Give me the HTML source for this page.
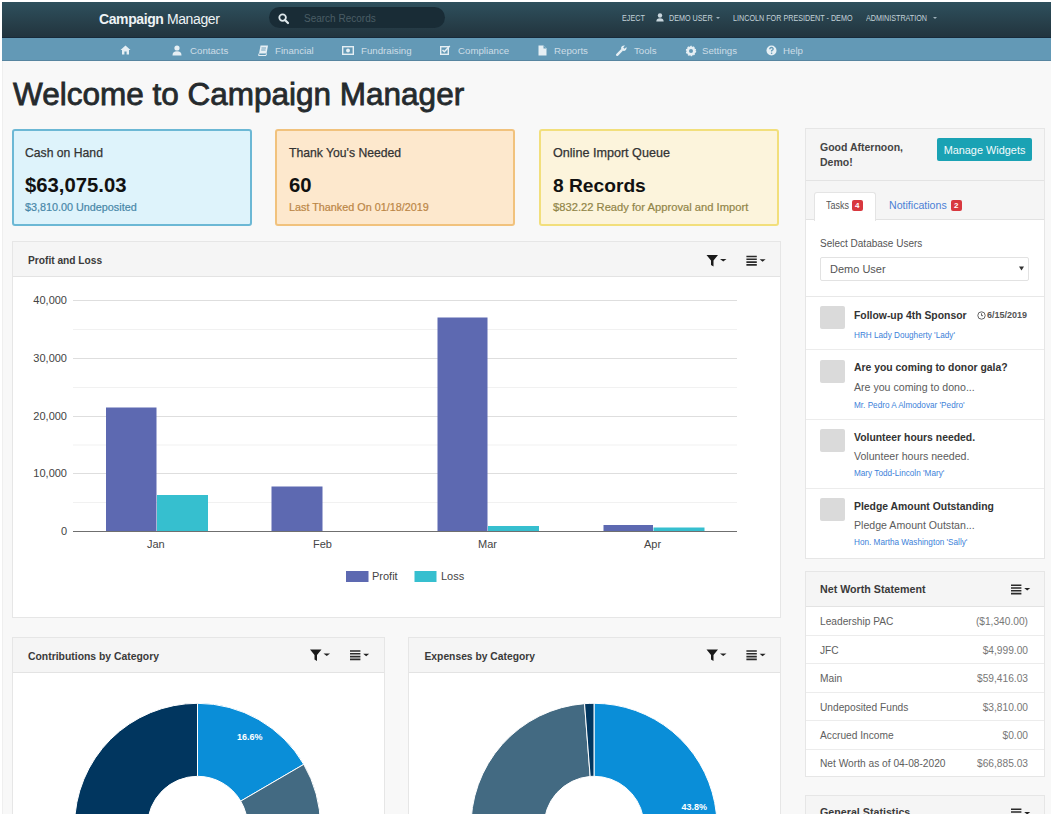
<!DOCTYPE html>
<html><head><meta charset="utf-8">
<style>
*{box-sizing:border-box;margin:0;padding:0}
html,body{width:1051px;height:816px;overflow:hidden;background:#fff;font-family:"Liberation Sans",sans-serif;color:#333}
.abs{position:absolute}
svg{position:absolute;overflow:visible}
#bg{position:absolute;left:2px;top:2px;width:1049px;height:814px;background:#f8f8f8}
#nav{position:absolute;left:2px;top:2px;width:1049px;height:36px;background:linear-gradient(#2e505d,#273f4a 60%,#22343e);border-bottom:1px solid #172a3a}
#sub{position:absolute;left:2px;top:38px;width:1049px;height:23px;background:#6399b6;border-bottom:1px solid #5785a0}
.t{position:absolute;white-space:nowrap;line-height:1}
.brand{left:99px;top:12px;font-size:14px;color:#eef3f5;letter-spacing:-0.4px}
.search{left:269px;top:7px;width:176px;height:21px;border-radius:11px;background:#192c36}
.nt{color:#c3d2d9;font-size:9px;top:13.5px;transform:scaleX(0.8);transform-origin:0 0}
.st{color:#cddde6;font-size:9.7px;top:46px}
.title{left:13px;top:79px;font-size:31.5px;color:#222;-webkit-text-stroke:0.8px #252a2d;color:#252a2d}
.card{position:absolute;top:129px;height:97px;width:240px;border:2px solid;border-radius:3px}
.ch{font-size:12.2px;color:#333;left:11px;top:16px;-webkit-text-stroke:0.25px #333}
.cv{font-size:20.3px;font-weight:bold;color:#111;left:11px;top:44px}
.cs{font-size:10.8px;left:11px;top:71px;-webkit-text-stroke:0.2px currentColor}
.panel{position:absolute;background:#fff;border:1px solid #e6e6e6}
.ph{position:absolute;left:0;top:0;right:0;background:#f5f5f5;border-bottom:1px solid #e3e3e3}
.pt{font-size:10.2px;font-weight:bold;color:#3a3a3a}
.ax{font-size:11px;color:#444}
.nw{font-size:10.2px;color:#5e5e5e}
</style></head><body>
<div id="bg"></div>
<div class="abs" style="left:2px;top:61px;width:1px;height:753px;background:#efefef"></div>
<div id="nav"></div>
<div id="sub"></div>
<div class="t brand"><b>Campaign</b> Manager</div>
<div class="abs search"></div>
<svg style="left:278px;top:13px" width="12" height="12" viewBox="0 0 12 12"><circle cx="4.6" cy="4.6" r="3.3" fill="none" stroke="#dfe8ec" stroke-width="1.8"/><path d="M7 7 L10 10" stroke="#dfe8ec" stroke-width="2.2" stroke-linecap="round"/></svg>
<div class="t" style="left:304px;top:13.5px;font-size:10px;color:#4a5d65">Search Records</div>

<div class="t nt" style="left:622px">EJECT</div>
<svg style="left:656px;top:13px" width="8" height="9" viewBox="0 0 8 9"><circle cx="4" cy="2.5" r="2.2" fill="#c9d7de"/><path d="M0.3 8.5 Q0.5 5.3 4 5.3 Q7.5 5.3 7.7 8.5Z" fill="#c9d7de"/></svg>
<div class="t nt" style="left:669px">DEMO USER</div>
<svg style="left:716px;top:17px" width="4" height="2" viewBox="0 0 4 2"><path d="M0 0H4L2 2Z" fill="#9fb2bb"/></svg>
<div class="t nt" style="left:733px">LINCOLN FOR PRESIDENT - DEMO</div>
<div class="t nt" style="left:866px">ADMINISTRATION</div>
<svg style="left:933px;top:17px" width="4" height="2" viewBox="0 0 4 2"><path d="M0 0H4L2 2Z" fill="#9fb2bb"/></svg>

<!-- subnav -->
<svg style="left:120px;top:45px" width="11" height="10" viewBox="0 0 11 10"><path d="M5.5 0.5 L10.5 5 H9 V9.5 H6.6 V6.6 H4.4 V9.5 H2 V5 H0.5Z" fill="#e6eff4"/></svg>
<svg style="left:172px;top:45px" width="10" height="11" viewBox="0 0 10 11"><circle cx="5" cy="3" r="2.6" fill="#e6eff4"/><path d="M0.5 10.5 Q0.5 6.3 5 6.3 Q9.5 6.3 9.5 10.5Z" fill="#e6eff4"/></svg>
<div class="t st" style="left:190px">Contacts</div>
<svg style="left:258px;top:45px" width="11" height="11" viewBox="0 0 11 11"><path d="M2.5 0.5 H10 L8.5 8.5 H1 Z" fill="#e6eff4"/><path d="M1 8.5 L0.6 10.5 H8 L8.5 8.5" fill="none" stroke="#e6eff4" stroke-width="1"/><path d="M3.5 3H8M3.2 5H7.6" stroke="#6399b6" stroke-width="0.9"/></svg>
<div class="t st" style="left:275px">Financial</div>
<svg style="left:342px;top:46px" width="12" height="9" viewBox="0 0 12 9"><rect x="0.7" y="0.7" width="10.6" height="7.6" fill="none" stroke="#e6eff4" stroke-width="1.4"/><circle cx="6" cy="4.5" r="1.9" fill="#e6eff4"/></svg>
<div class="t st" style="left:361px">Fundraising</div>
<svg style="left:440px;top:45px" width="11" height="10" viewBox="0 0 11 10"><rect x="0.7" y="1.7" width="7.6" height="7.6" fill="none" stroke="#e6eff4" stroke-width="1.4"/><path d="M2.5 5 L4.3 6.8 L9.8 1" fill="none" stroke="#e6eff4" stroke-width="1.5"/></svg>
<div class="t st" style="left:458px">Compliance</div>
<svg style="left:538px;top:45px" width="9" height="11" viewBox="0 0 9 11"><path d="M0.5 0.5 H5.5 L8.5 3.5 V10.5 H0.5Z" fill="#e6eff4"/><path d="M5.5 0.5 V3.5 H8.5" fill="#6399b6"/></svg>
<div class="t st" style="left:554px">Reports</div>
<svg style="left:616px;top:45px" width="11" height="11" viewBox="0 0 11 11"><path d="M1.2 9.8 L5.8 5.2" stroke="#e6eff4" stroke-width="2.4" stroke-linecap="round"/><path d="M5 3.5 A3 3 0 0 1 9 0.6 L7.2 2.4 L8.6 3.8 L10.4 2 A3 3 0 0 1 7.5 6 Z" fill="#e6eff4"/></svg>
<div class="t st" style="left:634px">Tools</div>
<svg style="left:686px;top:46px" width="10" height="10" viewBox="0 0 10 10"><circle cx="5" cy="5" r="3.3" fill="none" stroke="#e6eff4" stroke-width="2.6"/><circle cx="5" cy="5" r="4.6" fill="none" stroke="#e6eff4" stroke-width="1.2" stroke-dasharray="1.6 1.3"/></svg>
<div class="t st" style="left:702px">Settings</div>
<svg style="left:766px;top:45px" width="11" height="11" viewBox="0 0 11 11"><circle cx="5.5" cy="5.5" r="5" fill="#e6eff4"/><path d="M3.8 4.2 Q3.8 2.5 5.5 2.5 Q7.2 2.5 7.2 4 Q7.2 5 5.6 5.6 V6.6" fill="none" stroke="#6399b6" stroke-width="1.3"/><circle cx="5.6" cy="8.2" r="0.8" fill="#6399b6"/></svg>
<div class="t st" style="left:783px">Help</div>

<div class="t title">Welcome to Campaign Manager</div>

<div class="card" style="left:12px;background:#def3fb;border-color:#6cb8d5">
  <div class="t ch">Cash on Hand</div>
  <div class="t cv">$63,075.03</div>
  <div class="t cs" style="color:#4787a8">$3,810.00 Undeposited</div>
</div>
<div class="card" style="left:275px;background:#fde8cd;border-color:#f1c27d">
  <div class="t ch" style="left:12px">Thank You's Needed</div>
  <div class="t cv" style="left:12px">60</div>
  <div class="t cs" style="color:#bb8646;left:12px">Last Thanked On 01/18/2019</div>
</div>
<div class="card" style="left:539px;background:#fcf4dc;border-color:#f2df7c">
  <div class="t ch" style="font-size:12.6px;left:12px">Online Import Queue</div>
  <div class="t cv" style="font-size:19.2px;left:12px;top:45px">8 Records</div>
  <div class="t cs" style="color:#918548;font-size:11.2px;left:12px">$832.22 Ready for Approval and Import</div>
</div>

<!-- Profit and loss -->
<div class="panel" style="left:12px;top:241px;width:769px;height:377px">
  <div class="ph" style="height:35px"></div>
</div>
<div class="t pt" style="left:28px;top:256px">Profit and Loss</div>


<svg style="left:0;top:0" width="1051" height="816" viewBox="0 0 1051 816">

<g transform="translate(706.5 255)"><path d="M0 0 H11.5 L7 5.5 V11.5 L4.5 10 V5.5 Z" fill="#1a1a1a"/><path d="M13.5 4 H20 L16.75 6.5Z" fill="#222"/></g>
<g transform="translate(746.4 255.3)"><path d="M0 1.2H10.4M0 4H10.4M0 6.8H10.4M0 9.6H10.4" stroke="#2a2a2a" stroke-width="1.6"/><path d="M13.2 4 H19.2 L16.2 6.5Z" fill="#222"/></g>
<g stroke="#f1f1f1" stroke-width="1">
<path d="M73 329.5H737M73 387.5H737M73 445H737M73 502.5H737"/>
</g>
<g stroke="#dedede" stroke-width="1">
<path d="M73 300.5H737M73 358.5H737M73 416.5H737M73 473.5H737"/>
</g>
<g fill="#5d69b1">
<rect x="106" y="407.5" width="50.5" height="124"/>
<rect x="271.5" y="486.5" width="51" height="45"/>
<rect x="437.5" y="317.5" width="50" height="214"/>
<rect x="603.5" y="525" width="49.5" height="6.5"/>
<rect x="346" y="571" width="22.5" height="11"/>
</g>
<g fill="#36bfcf">
<rect x="157" y="495" width="51" height="36.5"/>
<rect x="488" y="526" width="51" height="5.5"/>
<rect x="653.5" y="527.5" width="51" height="4"/>
<rect x="414.5" y="571" width="22" height="11"/>
</g>
<path d="M73 531.5H737" stroke="#6f6f6f" stroke-width="1.2"/>
</svg>
<div class="t ax" style="right:984px;top:295px">40,000</div>
<div class="t ax" style="right:984px;top:353px">30,000</div>
<div class="t ax" style="right:984px;top:411px">20,000</div>
<div class="t ax" style="right:984px;top:468px">10,000</div>
<div class="t ax" style="right:984px;top:526px">0</div>
<div class="t ax" style="left:147px;top:539px">Jan</div>
<div class="t ax" style="left:313px;top:539px">Feb</div>
<div class="t ax" style="left:478px;top:539px">Mar</div>
<div class="t ax" style="left:644px;top:539px">Apr</div>
<div class="t ax" style="left:372px;top:571px">Profit</div>
<div class="t ax" style="left:441px;top:571px">Loss</div>

<!-- right column -->
<div class="panel" style="left:805px;top:128px;width:240px;height:431px">
  <div class="ph" style="height:52px"></div>
  <div class="abs" style="left:0;top:52px;width:238px;height:39px;background:#f5f5f5;border-bottom:1px solid #e2e2e2"></div>
  <div class="abs" style="left:8px;top:63px;width:62px;height:29px;background:#fff;border:1px solid #e4e4e4;border-bottom:none;border-radius:3px 3px 0 0"></div>
  <div class="abs" style="left:0;top:167px;width:238px;height:1px;background:#e8e8e8"></div>
  <div class="abs" style="left:0;top:220px;width:238px;height:1px;background:#ececec"></div>
  <div class="abs" style="left:0;top:290px;width:238px;height:1px;background:#ececec"></div>
  <div class="abs" style="left:0;top:359px;width:238px;height:1px;background:#ececec"></div>
</div>
<div class="t" style="left:820px;top:142px;font-size:10.5px;font-weight:bold;color:#444">Good Afternoon,</div>
<div class="t" style="left:820px;top:157px;font-size:10.5px;font-weight:bold;color:#444">Demo!</div>
<div class="abs" style="left:937px;top:138px;width:95px;height:23px;background:#1aa2b4;border-radius:2px"></div>
<div class="t" style="left:937px;width:95px;text-align:center;top:144.5px;font-size:10.9px;color:#f4fbfc">Manage Widgets</div>
<div class="t" style="left:825.5px;top:200.5px;font-size:10px;color:#555;transform:scaleX(0.9);transform-origin:0 0">Tasks</div>
<div class="abs" style="left:852px;top:199.5px;width:11px;height:11.5px;background:#d8383f;border-radius:2px"></div>
<div class="t" style="left:855px;top:201.5px;font-size:8px;font-weight:bold;color:#fff">4</div>
<div class="t" style="left:889px;top:200px;font-size:10.6px;color:#4a80d5">Notifications</div>
<div class="abs" style="left:951px;top:199.5px;width:11px;height:11.5px;background:#d8383f;border-radius:2px"></div>
<div class="t" style="left:954px;top:201.5px;font-size:8px;font-weight:bold;color:#fff">2</div>
<div class="t" style="left:820px;top:239px;font-size:10px;color:#555">Select Database Users</div>
<div class="abs" style="left:820px;top:257px;width:209px;height:24px;background:#fff;border:1px solid #e2e2e2;border-radius:2px"></div>
<div class="t" style="left:830px;top:263.5px;font-size:11px;color:#555">Demo User</div>
<svg style="left:1019px;top:266px" width="5" height="5" viewBox="0 0 5 5"><path d="M0 0.5H5L2.5 4.5Z" fill="#333"/></svg>

<div class="abs" style="left:820px;top:306px;width:25px;height:23px;background:#dadada;border-radius:2px"></div>
<div class="t" style="left:854px;top:310.5px;font-size:10.4px;font-weight:bold;color:#333">Follow-up 4th Sponsor</div>
<svg style="left:977px;top:310.5px" width="9" height="9" viewBox="0 0 9 9"><circle cx="4.5" cy="4.5" r="3.7" fill="none" stroke="#555" stroke-width="0.9"/><path d="M4.5 2.3V4.7H6" fill="none" stroke="#555" stroke-width="0.9"/></svg>
<div class="t" style="left:987px;top:311px;font-size:9px;font-weight:bold;color:#555">6/15/2019</div>
<div class="t" style="left:854px;top:332px;font-size:8.2px;color:#3d7fd9">HRH Lady Dougherty 'Lady'</div>

<div class="abs" style="left:820px;top:360px;width:25px;height:23px;background:#dadada;border-radius:2px"></div>
<div class="t" style="left:854px;top:363px;font-size:10.4px;font-weight:bold;color:#333">Are you coming to donor gala?</div>
<div class="t" style="left:854px;top:382px;font-size:10.6px;color:#5c5c5c">Are you coming to dono...</div>
<div class="t" style="left:854px;top:401.5px;font-size:8.2px;color:#3d7fd9">Mr. Pedro A Almodovar 'Pedro'</div>

<div class="abs" style="left:820px;top:429px;width:25px;height:23px;background:#dadada;border-radius:2px"></div>
<div class="t" style="left:854px;top:432.5px;font-size:10.4px;font-weight:bold;color:#333">Volunteer hours needed.</div>
<div class="t" style="left:854px;top:450.5px;font-size:10.6px;color:#5c5c5c">Volunteer hours needed.</div>
<div class="t" style="left:854px;top:470px;font-size:8.2px;color:#3d7fd9">Mary Todd-Lincoln 'Mary'</div>

<div class="abs" style="left:820px;top:498px;width:25px;height:23px;background:#dadada;border-radius:2px"></div>
<div class="t" style="left:854px;top:501.7px;font-size:10.4px;font-weight:bold;color:#333">Pledge Amount Outstanding</div>
<div class="t" style="left:854px;top:520px;font-size:10.6px;color:#5c5c5c">Pledge Amount Outstan...</div>
<div class="t" style="left:854px;top:539px;font-size:8.2px;color:#3d7fd9">Hon. Martha Washington 'Sally'</div>

<!-- net worth -->
<div class="panel" style="left:805px;top:571px;width:240px;height:206px">
  <div class="ph" style="height:35px"></div>
  <div class="abs" style="left:0;top:63px;width:238px;height:1px;background:#ececec"></div>
  <div class="abs" style="left:0;top:91px;width:238px;height:1px;background:#ececec"></div>
  <div class="abs" style="left:0;top:120px;width:238px;height:1px;background:#ececec"></div>
  <div class="abs" style="left:0;top:148px;width:238px;height:1px;background:#ececec"></div>
  <div class="abs" style="left:0;top:177px;width:238px;height:1px;background:#ececec"></div>
</div>
<div class="t pt" style="left:820px;top:584px;font-size:10.7px">Net Worth Statement</div>
<svg style="left:1010.5px;top:583.5px" width="22" height="12" viewBox="0 0 22 12"><g transform="translate(0 0)"><path d="M0 1.2H10.4M0 4H10.4M0 6.8H10.4M0 9.6H10.4" stroke="#2a2a2a" stroke-width="1.6"/><path d="M13.2 4 H19.2 L16.2 6.5Z" fill="#222"/></g></svg>
<div class="t nw" style="left:820px;top:617px">Leadership PAC</div><div class="t nw" style="color:#777;right:23px;top:617px">($1,340.00)</div>
<div class="t nw" style="left:820px;top:645.5px">JFC</div><div class="t nw" style="color:#777;right:23px;top:645.5px">$4,999.00</div>
<div class="t nw" style="left:820px;top:674px">Main</div><div class="t nw" style="color:#777;right:23px;top:674px">$59,416.03</div>
<div class="t nw" style="left:820px;top:702.5px">Undeposited Funds</div><div class="t nw" style="color:#777;right:23px;top:702.5px">$3,810.00</div>
<div class="t nw" style="left:820px;top:731px">Accrued Income</div><div class="t nw" style="color:#777;right:23px;top:731px">$0.00</div>
<div class="t nw" style="left:820px;top:759px">Net Worth as of 04-08-2020</div><div class="t nw" style="color:#777;right:23px;top:759px">$66,885.03</div>

<div class="panel" style="left:805px;top:795px;width:240px;height:40px"><div class="ph" style="height:35px"></div></div>
<div class="t pt" style="left:820px;top:807px;font-size:10.7px">General Statistics</div>
<svg style="left:1010.5px;top:807.5px" width="22" height="12" viewBox="0 0 22 12"><g transform="translate(0 0)"><path d="M0 1.2H10.4M0 4H10.4M0 6.8H10.4M0 9.6H10.4" stroke="#2a2a2a" stroke-width="1.6"/><path d="M13.2 4 H19.2 L16.2 6.5Z" fill="#222"/></g></svg>

<!-- donut panels -->
<div class="panel" style="left:12px;top:637px;width:373px;height:200px"><div class="ph" style="height:35px"></div></div>
<div class="panel" style="left:408px;top:637px;width:373px;height:200px"><div class="ph" style="height:35px"></div></div>
<div class="t pt" style="left:28px;top:651.5px;font-size:10.4px">Contributions by Category</div>
<div class="t pt" style="left:424.5px;top:651.5px;font-size:10.3px">Expenses by Category</div>
<svg style="left:0;top:0" width="1051" height="816" viewBox="0 0 1051 816">
<g transform="translate(310 649.5)"><path d="M0 0 H11.5 L7 5.5 V11.5 L4.5 10 V5.5 Z" fill="#1a1a1a"/><path d="M13.5 4 H20 L16.75 6.5Z" fill="#222"/></g>
<g transform="translate(350 649.8)"><path d="M0 1.2H10.4M0 4H10.4M0 6.8H10.4M0 9.6H10.4" stroke="#2a2a2a" stroke-width="1.6"/><path d="M13.2 4 H19.2 L16.2 6.5Z" fill="#222"/></g>
<g transform="translate(706.5 649.5)"><path d="M0 0 H11.5 L7 5.5 V11.5 L4.5 10 V5.5 Z" fill="#1a1a1a"/><path d="M13.5 4 H20 L16.75 6.5Z" fill="#222"/></g>
<g transform="translate(746.4 649.8)"><path d="M0 1.2H10.4M0 4H10.4M0 6.8H10.4M0 9.6H10.4" stroke="#2a2a2a" stroke-width="1.6"/><path d="M13.2 4 H19.2 L16.2 6.5Z" fill="#222"/></g>
<g stroke="#fff" stroke-width="1">
<path d="M197.50 703.30A123 123 0 0 1 303.76 764.35L240.70 801.12A50 50 0 0 0 197.50 776.30Z" fill="#0a8ed8"/>
<path d="M303.76 764.35A123 123 0 0 1 197.50 949.30L197.50 876.30A50 50 0 0 0 240.70 801.12Z" fill="#436a82"/>
<path d="M197.50 949.30A123 123 0 0 1 197.50 703.30L197.50 776.30A50 50 0 0 0 197.50 876.30Z" fill="#01365f"/>
<path d="M594.00 703.30A123 123 0 0 1 640.67 940.10L612.97 872.56A50 50 0 0 0 594.00 776.30Z" fill="#0a8ed8"/>
<path d="M640.67 940.10A123 123 0 0 1 594.00 949.30L594.00 876.30A50 50 0 0 0 612.97 872.56Z" fill="#01365f"/>
<path d="M594.00 949.30A123 123 0 0 1 584.56 703.66L590.16 776.45A50 50 0 0 0 594.00 876.30Z" fill="#436a82"/>
<path d="M584.56 703.66A123 123 0 0 1 594.00 703.30L594.00 776.30A50 50 0 0 0 590.16 776.45Z" fill="#01365f"/>
</g>
</svg>
<div class="t" style="left:237px;top:733px;font-size:9px;font-weight:bold;color:#fff">16.6%</div>
<div class="t" style="left:681.5px;top:803px;font-size:9px;font-weight:bold;color:#fff">43.8%</div>
<div class="abs" style="left:0;top:814px;width:1051px;height:2px;background:#fff"></div>
</body></html>
